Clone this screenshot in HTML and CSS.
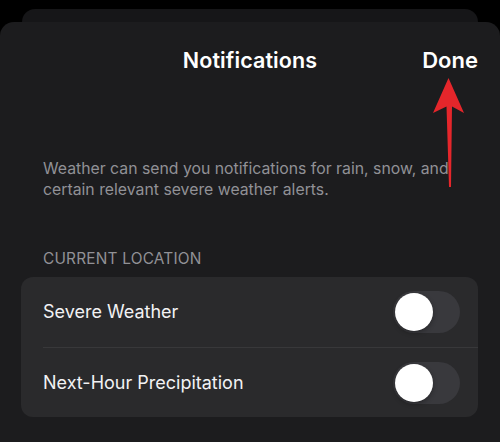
FILE: index.html
```html
<!DOCTYPE html>
<html lang="en">
<head>
<meta charset="utf-8">
<title>Notifications</title>
<link rel="stylesheet" href="styles.css">
</head>
<body>
<div class="screen">
  <div class="sheet-behind"></div>
  <div class="sheet">
    <header class="nav">
      <span class="nav-side"></span>
      <h1 class="nav-title">Notifications</h1>
      <button class="nav-done">Done</button>
    </header>

    <p class="intro">Weather can send you notifications for rain, snow, and certain relevant severe weather alerts.</p>

    <h2 class="section-label">CURRENT LOCATION</h2>
    <div class="group">
      <div class="row">
        <span class="row-label">Severe Weather</span>
        <span class="switch"><span class="knob"></span></span>
      </div>
      <div class="row">
        <span class="row-label">Next-Hour Precipitation</span>
        <span class="switch"><span class="knob"></span></span>
      </div>
    </div>
  </div>

  <!-- callout arrow pointing at the Done button -->
  <svg class="callout" width="40" height="120" viewBox="0 0 40 120" aria-hidden="true">
    <path d="M18.5 0 L34 35 L22 28.5 L21 109 L19 109 L16.5 28.5 L3 35 Z" fill="#e5262b"/>
  </svg>
</div>
</body>
</html>
```

FILE: styles.css
```css
* { box-sizing: border-box; }

html, body {
  margin: 0;
  background: #000;
}

body {
  font-family: Inter, "Noto Sans", "Liberation Sans", sans-serif;
  color: #fff;
  -webkit-font-smoothing: antialiased;
}

.screen {
  position: relative;
  width: 500px;
  height: 442px;
  overflow: hidden;
  padding-top: 9px;
}

.sheet-behind {
  height: 13px;
  margin: 0 22px;
  background: #161618;
  border-radius: 13px 13px 0 0;
}

.sheet {
  height: 430px;
  background: #1c1c1e;
  border-radius: 14px 14px 0 0;
  padding-top: 26px;
}

.nav {
  display: grid;
  grid-template-columns: 1fr auto 1fr;
  align-items: center;
  padding: 0 22px 0 22px;
  height: 24px;
}

.nav-title {
  margin: 0;
  font-size: 21.5px;
  font-weight: 600;
  line-height: 24px;
  letter-spacing: 0.1px;
}

.nav-done {
  justify-self: end;
  background: none;
  border: 0;
  padding: 0;
  color: #fff;
  font: inherit;
  font-size: 22px;
  font-weight: 600;
  line-height: 24px;
}

.intro {
  margin: 86px 0 0;
  padding: 0 40px 0 43px;
  font-size: 15.8px;
  line-height: 21px;
  color: #919196;
}

.section-label {
  margin: 50px 0 0;
  padding: 0 43px;
  font-size: 15.4px;
  font-weight: 400;
  line-height: 18px;
  letter-spacing: 0.2px;
  color: #919196;
}

.group {
  margin: 9px 22px 0 21px;
  background: #2a2a2c;
  border-radius: 12px;
}

.row {
  display: flex;
  align-items: center;
  justify-content: space-between;
  height: 70px;
  margin-left: 22px;
  padding-right: 18px;
}

.row + .row {
  border-top: 1px solid #38383a;
}

.row-label {
  font-size: 18px;
  line-height: 22px;
  color: #f2f2f4;
}

.switch {
  display: flex;
  align-items: center;
  width: 67px;
  height: 42px;
  padding: 2px;
  border-radius: 21px;
  background: #39393d;
}

.knob {
  width: 38px;
  height: 38px;
  border-radius: 50%;
  background: #fff;
  box-shadow: 0 2px 5px rgba(0, 0, 0, 0.3);
}

.callout {
  position: absolute;
  left: 430px;
  top: 78px;
}
```
